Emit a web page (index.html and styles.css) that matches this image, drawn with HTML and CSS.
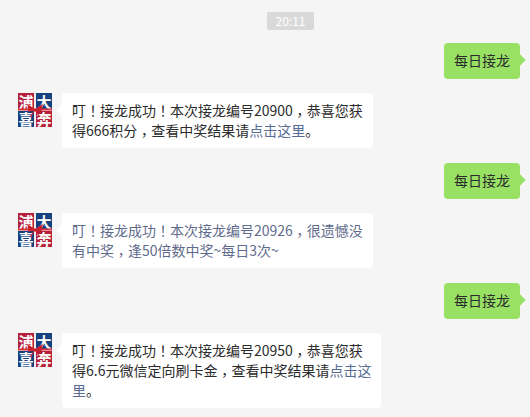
FILE: index.html
```html
<!DOCTYPE html>
<html lang="zh-CN">
<head>
<meta charset="utf-8">
<title>每日接龙</title>
<link rel="stylesheet" href="styles.css">
</head>
<body>
<main class="chat">
  <div class="time"><span class="time-pill">20:11</span></div>

  <div class="row row-me"><div class="bubble bubble-me">每日接龙</div></div>
  <div class="row row-bot">
    <svg class="avatar" viewBox="0 0 34 34">
      <rect width="34" height="34" fill="#f4eef0"/>
      <rect width="16" height="16" fill="#b5203a"/>
      <rect x="18" width="16" height="16" fill="#17407f"/>
      <rect y="18" width="16" height="16" fill="#17407f"/>
      <rect x="18" y="18" width="16" height="16" fill="#b5203a"/>
      <text x="8" y="14.5" class="logo-char">浦</text>
      <text x="26" y="14.5" class="logo-char">大</text>
      <text x="8" y="31.5" class="logo-char">喜</text>
      <text x="26" y="31.5" class="logo-char">奔</text>
      <path d="M0 16.5 H34" stroke="#d8333f" stroke-width="2"/>
      <path d="M17 17 L10 12 L11 18 Z M17 17 L24 12 L23 18 Z M17 17 L12 24 M17 17 L22 24" fill="#c9202f" stroke="#c9202f" stroke-width="1.2"/>
    </svg>
    <div class="bubble bubble-bot">叮<span class="punct" lang="zh-TW">！</span>接龙成功<span class="punct" lang="zh-TW">！</span>本次接龙编号20900<span class="punct comma" lang="zh-TW">，</span>恭喜您获<br>得666积分<span class="punct comma" lang="zh-TW">，</span>查看中奖结果请<a class="link">点击这里</a>。</div>
  </div>

  <div class="row row-me"><div class="bubble bubble-me">每日接龙</div></div>
  <div class="row row-bot">
    <svg class="avatar" viewBox="0 0 34 34">
      <rect width="34" height="34" fill="#f4eef0"/>
      <rect width="16" height="16" fill="#b5203a"/>
      <rect x="18" width="16" height="16" fill="#17407f"/>
      <rect y="18" width="16" height="16" fill="#17407f"/>
      <rect x="18" y="18" width="16" height="16" fill="#b5203a"/>
      <text x="8" y="14.5" class="logo-char">浦</text>
      <text x="26" y="14.5" class="logo-char">大</text>
      <text x="8" y="31.5" class="logo-char">喜</text>
      <text x="26" y="31.5" class="logo-char">奔</text>
      <path d="M0 16.5 H34" stroke="#d8333f" stroke-width="2"/>
      <path d="M17 17 L10 12 L11 18 Z M17 17 L24 12 L23 18 Z M17 17 L12 24 M17 17 L22 24" fill="#c9202f" stroke="#c9202f" stroke-width="1.2"/>
    </svg>
    <div class="bubble bubble-bot muted">叮<span class="punct" lang="zh-TW">！</span>接龙成功<span class="punct" lang="zh-TW">！</span>本次接龙编号20926<span class="punct comma" lang="zh-TW">，</span>很遗憾没<br>有中奖<span class="punct comma" lang="zh-TW">，</span>逢50倍数中奖~每日3次~</div>
  </div>

  <div class="row row-me"><div class="bubble bubble-me">每日接龙</div></div>
  <div class="row row-bot">
    <svg class="avatar" viewBox="0 0 34 34">
      <rect width="34" height="34" fill="#f4eef0"/>
      <rect width="16" height="16" fill="#b5203a"/>
      <rect x="18" width="16" height="16" fill="#17407f"/>
      <rect y="18" width="16" height="16" fill="#17407f"/>
      <rect x="18" y="18" width="16" height="16" fill="#b5203a"/>
      <text x="8" y="14.5" class="logo-char">浦</text>
      <text x="26" y="14.5" class="logo-char">大</text>
      <text x="8" y="31.5" class="logo-char">喜</text>
      <text x="26" y="31.5" class="logo-char">奔</text>
      <path d="M0 16.5 H34" stroke="#d8333f" stroke-width="2"/>
      <path d="M17 17 L10 12 L11 18 Z M17 17 L24 12 L23 18 Z M17 17 L12 24 M17 17 L22 24" fill="#c9202f" stroke="#c9202f" stroke-width="1.2"/>
    </svg>
    <div class="bubble bubble-bot">叮<span class="punct" lang="zh-TW">！</span>接龙成功<span class="punct" lang="zh-TW">！</span>本次接龙编号20950<span class="punct comma" lang="zh-TW">，</span>恭喜您获<br>得6.6元微信定向刷卡金<span class="punct comma" lang="zh-TW">，</span>查看中奖结果请<a class="link">点击这<br>里</a>。</div>
  </div>
</main>
</body>
</html>
```

FILE: styles.css
```css
* { box-sizing: border-box; }
html, body { margin: 0; padding: 0; }
body {
  width: 530px;
  height: 417px;
  overflow: hidden;
  background: #f5f5f5;
  font-family: "Noto Sans CJK SC", "Liberation Sans", sans-serif;
  font-size: 14px;
  color: #2b2b2b;
}
.chat {
  display: flex;
  flex-direction: column;
  padding: 12px 10px 0 18px;
}
.time {
  display: flex;
  justify-content: center;
  margin-left: 43px;
  margin-bottom: 13px;
}
.time-pill {
  width: 47px;
  height: 18px;
  line-height: 18px;
  text-align: center;
  font-size: 12px;
  color: #fff;
  background: #d9d9d9;
  border-radius: 2px;
}
.row { display: flex; }
.row-me { justify-content: flex-end; margin-bottom: 14px; }
.row-bot { margin-bottom: 15px; }
.bubble { position: relative; border-radius: 4px; line-height: 20px; }
.bubble::after {
  content: "";
  position: absolute;
  top: 13px;
  width: 8px;
  height: 8px;
  transform: rotate(45deg);
}
.bubble-me {
  width: 76px;
  height: 36px;
  padding-top: 7px;
  line-height: 20px;
  text-align: center;
  background: #98e165;
  white-space: nowrap;
}
.bubble-me::after { right: -4px; background: #98e165; }
.bubble-bot {
  margin-left: 10px;
  padding: 7px 10px 8px;
  background: #fff;
  white-space: nowrap;
}
.bubble-bot::after { left: -4px; background: #fff; }
.avatar { width: 34px; height: 34px; flex: none; overflow: visible; }
.logo-char {
  font-size: 15px;
  font-weight: 700;
  fill: #fff;
  text-anchor: middle;
}
.punct { font-family: "Noto Sans CJK TC", "Noto Sans CJK SC", sans-serif; }
.comma { line-height: 0; vertical-align: -4px; }
.muted { color: #5f6b8c; }
.link { color: #576b95; }
```
